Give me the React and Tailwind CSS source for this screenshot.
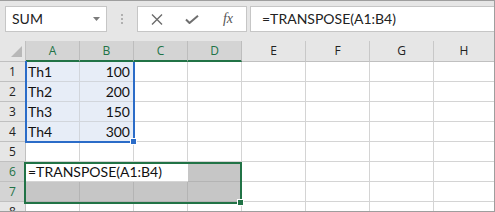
import React from "react";

const colsW = ["w-[54px]", "w-[54px]", "w-[54px]", "w-[54px]", "w-[64px]", "w-[64px]", "w-[64px]", "flex-1"];
const letters = ["A", "B", "C", "D", "E", "F", "G", "H"];
const data = [
  ["Th1", "100"],
  ["Th2", "200"],
  ["Th3", "150"],
  ["Th4", "300"],
];

const cellFont = { fontFamily: "Lato, 'Liberation Sans', sans-serif" };
const uiFont = { fontFamily: "'Open Sans', 'Noto Sans', sans-serif" };

function Cell({ i, r, children }) {
  const inSel = r >= 1 && r <= 4 && i <= 1;
  const gray = (r === 6 && i === 3) || (r === 7 && i <= 3);
  const overflowWhite = r === 6 && i <= 2;
  let cls = "h-[20px] shrink-0 flex items-center border-b ";
  cls += colsW[i] + " ";
  if (gray) cls += "bg-[#c6c6c6] border-[#b4b4b4] border-r ";
  else if (inSel) cls += "bg-[#e7edf7] border-[#d2d6dc] border-r ";
  else if (overflowWhite) cls += "bg-white border-[#d4d4d4] ";
  else cls += "bg-white border-[#d4d4d4] border-r ";
  if (i === 7) cls += "border-r-0 ";
  return <div className={cls}>{children}</div>;
}

export default function App() {
  const rows = [1, 2, 3, 4, 5, 6, 7, 8];
  return (
    <div className="w-[495px] h-[212px] overflow-hidden relative bg-white border-t border-r border-b border-[#9e9e9e]">
      {/* toolbar */}
      <div className="h-[40px] bg-[#e6e6e6] flex items-start pt-[5px]">
        <div className="ml-[5px] w-[102px] h-[26px] bg-white border border-[#c6c6c6] flex items-center justify-between pl-[6px] pr-[6px]">
          <span className="text-[14px] text-[#222] leading-none" style={cellFont}>SUM</span>
          <svg width="7" height="4" viewBox="0 0 7 4"><path d="M0 0h7L3.5 4z" fill="#7b7b7b" /></svg>
        </div>
        <div className="w-[30px] h-[26px] flex flex-col items-center justify-center gap-[2px]">
          <div className="w-[2px] h-[2px] bg-[#b0b0b0]" />
          <div className="w-[2px] h-[2px] bg-[#b0b0b0]" />
          <div className="w-[2px] h-[2px] bg-[#b0b0b0]" />
        </div>
        <div className="w-[110px] h-[26px] bg-white border border-[#c6c6c6] flex items-center">
          <div className="w-[34px] flex justify-center ml-[2px]">
            <svg width="12" height="11" viewBox="0 0 12 11"><path d="M1 0.5l10 10M11 0.5l-10 10" stroke="#6b6b6b" strokeWidth="1.4" fill="none" /></svg>
          </div>
          <div className="w-[36px] flex justify-center">
            <svg width="14" height="9" viewBox="0 0 14 9"><path d="M1 4.5l3.5 3.5L13 0.8" stroke="#6f6f6f" strokeWidth="2" fill="none" /></svg>
          </div>
          <div className="flex-1 flex justify-center">
            <span className="text-[14px] italic text-[#555] leading-none" style={{ fontFamily: "'Liberation Serif', serif" }}>fx</span>
          </div>
        </div>
        <div className="ml-[3px] flex-1 h-[26px] bg-white border-y border-l border-[#c6c6c6] flex items-center pl-[11px]">
          <span className="text-[14px] text-[#222] leading-none" style={cellFont}>=TRANSPOSE(A1:B4)</span>
        </div>
      </div>

      {/* column header row */}
      <div className="flex h-[21px] bg-[#e6e6e6]" style={uiFont}>
        <div className="w-[26px] shrink-0 border-r border-b border-[#c0c0c0] relative">
          <svg className="absolute left-[11px] top-[5px]" width="11" height="11" viewBox="0 0 11 11"><path d="M11 0V11H0z" fill="#b8b8b8" /></svg>
        </div>
        {letters.map((l, i) => (
          <div
            key={l}
            className={
              colsW[i] +
              " shrink-0 flex items-center justify-center text-[12px] " +
              (i <= 3
                ? "bg-[#d4d4d4] text-[#217346] border-r border-r-[#bdbdbd] border-b-2 border-b-[#217346] "
                : "text-[#222] border-r border-r-[#c8c8c8] border-b border-b-[#c0c0c0] ") +
              (i === 7 ? "border-r-0" : "")
            }
          >
            {l}
          </div>
        ))}
      </div>

      {/* data rows */}
      {rows.map((r) => (
        <div key={r} className="flex h-[20px]">
          <div
            className={
              "w-[26px] shrink-0 h-[20px] flex items-center justify-center text-[12px] border-r border-b border-[#c0c0c0] " +
              (r === 6 || r === 7 ? "bg-[#d4d4d4] text-[#217346]" : "bg-[#e6e6e6] text-[#222]")
            }
            style={uiFont}
          >
            {r}
          </div>
          {letters.map((l, i) => {
            let content = null;
            if (r <= 4 && i === 0)
              content = <span className="pl-[2px] text-[14px] text-[#111] leading-none" style={cellFont}>{data[r - 1][0]}</span>;
            if (r <= 4 && i === 1)
              content = <span className="w-full text-right pr-[3px] text-[14px] text-[#111] leading-none" style={cellFont}>{data[r - 1][1]}</span>;
            if (r === 6 && i === 0)
              content = <span className="relative z-10 pl-[2px] text-[14px] text-[#111] leading-none whitespace-nowrap" style={cellFont}>=TRANSPOSE(A1:B4)</span>;
            return (
              <Cell key={l} i={i} r={r}>
                {content}
              </Cell>
            );
          })}
        </div>
      ))}

      {/* blue selection A1:B4 */}
      <div className="absolute left-[25px] top-[61px] w-[110px] h-[81px] border-2 border-t-0 border-[#2b6cc8] pointer-events-none" />
      <div className="absolute left-[25px] top-[60px] w-[2px] h-[2px] bg-[#2b6cc8]" />
      <div className="absolute left-[130px] top-[137px] w-[7px] h-[7px] bg-[#2b6cc8] border border-white" />

      {/* green selection A6:D7 */}
      <div className="absolute left-[24px] top-[161px] w-[218px] h-[42px] border-2 border-[#217346] pointer-events-none z-20" />
      <div className="absolute left-[237px] top-[198px] w-[7px] h-[7px] bg-[#217346] border border-white z-20" />
    </div>
  );
}
